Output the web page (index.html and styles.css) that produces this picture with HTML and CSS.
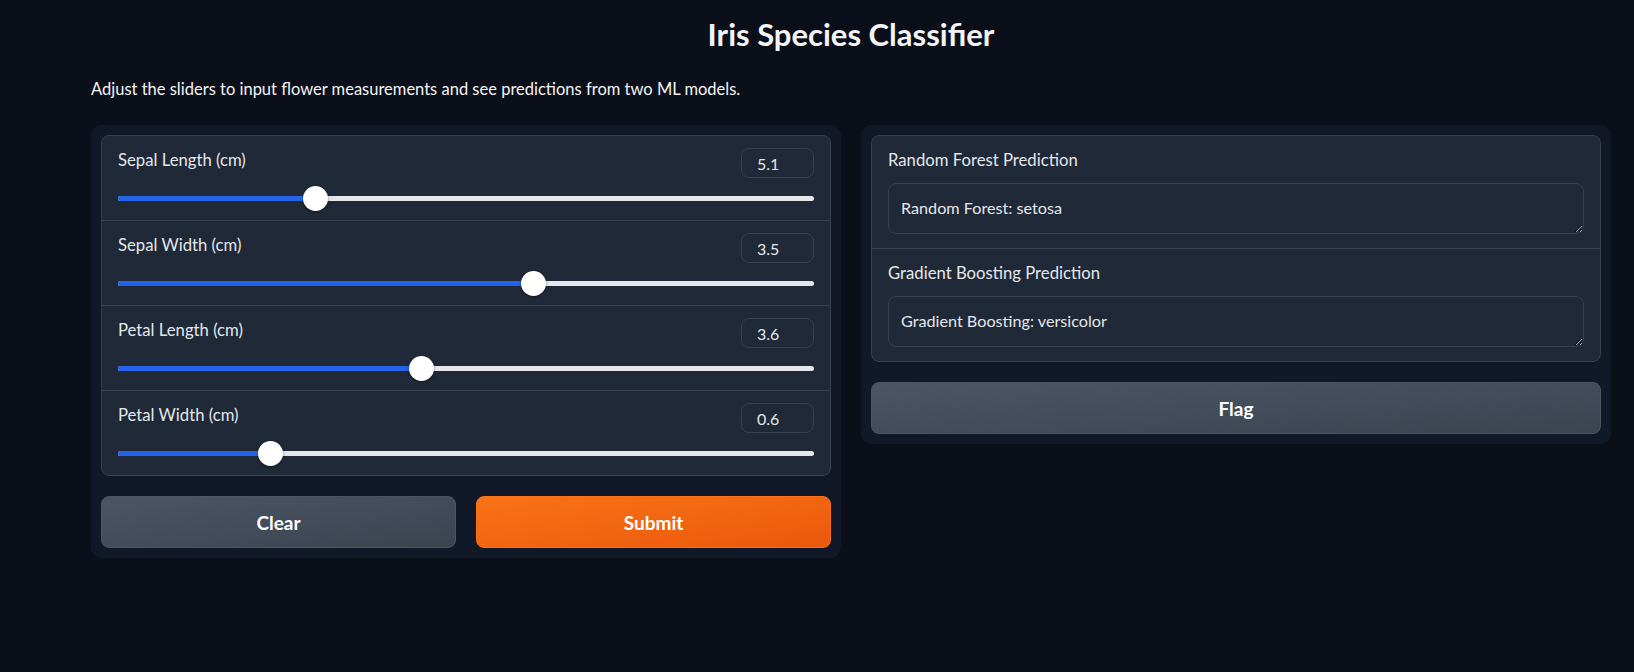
FILE: index.html
```html
<!DOCTYPE html>
<html lang="en">
<head>
<meta charset="utf-8">
<title>Iris Species Classifier</title>
<link rel="stylesheet" href="styles.css">
</head>
<body>
<div class="app">
  <h1 class="title">Iris Species Classifier</h1>
  <p class="desc">Adjust the sliders to input flower measurements and see predictions from two ML models.</p>
  <div class="row">
    <div class="panel">
      <div class="box">
        <div class="slider-block">
          <div class="slider-head"><span class="label">Sepal Length (cm)</span><input class="num" type="text" value="5.1"></div>
          <div class="slider" style="--f:0.275"><div class="track"><div class="fill"></div></div><div class="thumb"></div></div>
        </div>
        <div class="slider-block">
          <div class="slider-head"><span class="label">Sepal Width (cm)</span><input class="num" type="text" value="3.5"></div>
          <div class="slider" style="--f:0.6"><div class="track"><div class="fill"></div></div><div class="thumb"></div></div>
        </div>
        <div class="slider-block">
          <div class="slider-head"><span class="label">Petal Length (cm)</span><input class="num" type="text" value="3.6"></div>
          <div class="slider" style="--f:0.4333"><div class="track"><div class="fill"></div></div><div class="thumb"></div></div>
        </div>
        <div class="slider-block">
          <div class="slider-head"><span class="label">Petal Width (cm)</span><input class="num" type="text" value="0.6"></div>
          <div class="slider" style="--f:0.2083"><div class="track"><div class="fill"></div></div><div class="thumb"></div></div>
        </div>
      </div>
      <div class="btn-row">
        <button class="btn secondary">Clear</button>
        <button class="btn primary">Submit</button>
      </div>
    </div>
    <div class="panel">
      <div class="box">
        <div class="out-block">
          <span class="label">Random Forest Prediction</span>
          <textarea class="out" rows="1" readonly>Random Forest: setosa</textarea>
        </div>
        <div class="out-block">
          <span class="label">Gradient Boosting Prediction</span>
          <textarea class="out" rows="1" readonly>Gradient Boosting: versicolor</textarea>
        </div>
      </div>
      <button class="btn secondary full">Flag</button>
    </div>
  </div>
</div>
</body>
</html>
```

FILE: styles.css
```css
* { box-sizing: border-box; }
html { color-scheme: dark; }
body {
  margin: 0;
  background: #0b0f19;
  font-family: "Lato", "Noto Sans", sans-serif;
  color: #e5e7eb;
}
.app {
  width: 1520px;
  margin-left: 91px;
  padding-top: 16px;
}
.title {
  margin: 0;
  text-align: center;
  font-size: 31px;
  line-height: 36px;
  font-weight: 700;
  color: #f3f4f6;
}
.desc {
  margin: 25px 0 24px;
  font-size: 16.5px;
  line-height: 24px;
  color: #f3f4f6;
}
.row {
  display: flex;
  gap: 20px;
  align-items: flex-start;
}
.panel {
  flex: 1 1 0;
  background: #111827;
  border-radius: 10px;
  padding: 10px;
  display: flex;
  flex-direction: column;
  gap: 20px;
}
.box {
  background: #1f2937;
  border: 1px solid #374151;
  border-radius: 8px;
}
.slider-block {
  padding: 12px 16px 9px;
}
.slider-block + .slider-block,
.out-block + .out-block {
  border-top: 1px solid #374151;
}
.slider-head {
  display: flex;
  justify-content: space-between;
  align-items: flex-start;
  height: 30px;
}
.label {
  font-size: 16.7px;
  line-height: 24px;
  color: #e5e7eb;
  display: block;
}
.num {
  width: 73px;
  height: 30px;
  border: 1px solid #374151;
  border-radius: 8px;
  background: #1f2937;
  color: #e5e7eb;
  font-family: inherit;
  font-size: 16px;
  padding: 0 0 0 15px;
  outline: none;
}
.slider {
  position: relative;
  height: 25px;
  margin-top: 8px;
}
.track {
  position: absolute;
  left: 0;
  right: 0;
  top: 10px;
  height: 5px;
  border-radius: 3px;
  background: #e5e7eb;
  overflow: hidden;
}
.fill {
  height: 100%;
  width: calc(12.5px + var(--f) * (100% - 25px));
  background: #2563eb;
}
.thumb {
  position: absolute;
  top: 0;
  left: calc(var(--f) * (100% - 25px));
  width: 25px;
  height: 25px;
  border-radius: 50%;
  background: #ffffff;
  box-shadow: 0 1px 3px rgba(0, 0, 0, 0.4);
}
.btn-row {
  display: flex;
  gap: 20px;
}
.btn {
  flex: 1 1 0;
  height: 52px;
  border-radius: 8px;
  font-family: inherit;
  font-size: 19px;
  font-weight: 700;
  color: #ffffff;
  cursor: pointer;
}
.secondary {
  background: linear-gradient(to bottom right, #4b5563, #3c4452);
  border: 1px solid #4b5563;
}
.primary {
  background: linear-gradient(to bottom right, #f97316, #ea580c);
  border: 1px solid #f97316;
}
.full {
  width: 100%;
  flex: none;
}
.out-block {
  padding: 12px 16px 14px;
}
.out-block .label {
  margin-bottom: 11px;
}
.out {
  display: block;
  width: 100%;
  height: 51px;
  resize: vertical;
  border: 1px solid #374151;
  border-radius: 8px;
  background: #1f2937;
  color: #e5e7eb;
  font-family: inherit;
  font-size: 16.2px;
  line-height: 24px;
  padding: 12px 12px;
  outline: none;
  overflow: hidden;
}
```
